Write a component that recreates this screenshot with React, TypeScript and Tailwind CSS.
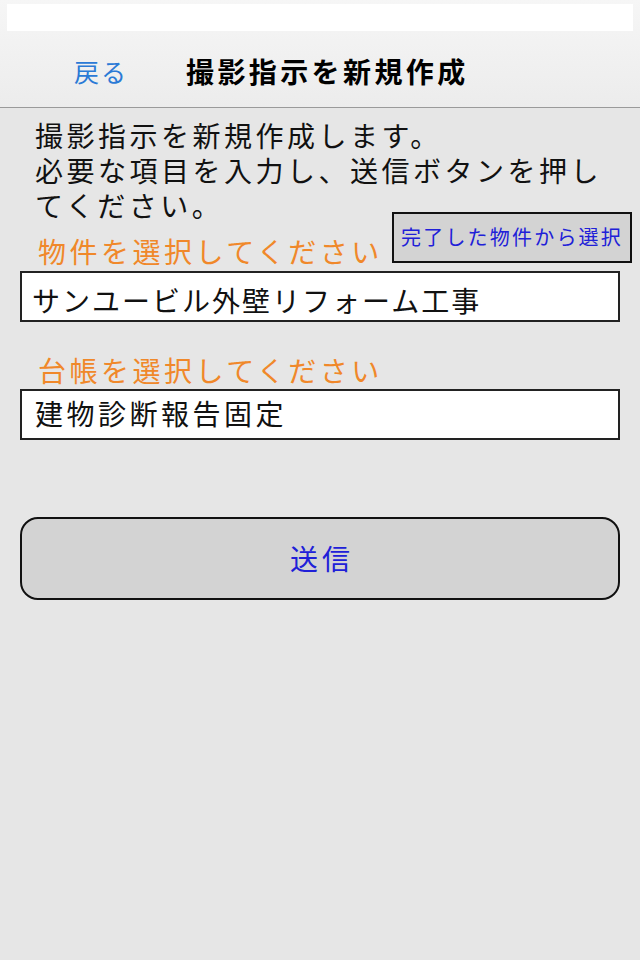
import React from "react";

const FONT = { fontFamily: '"Noto Sans CJK JP", "Noto Sans", sans-serif' };

export default function App() {
  return (
    <div className="w-[640px] h-[960px] bg-[#e6e6e6] flex flex-col" style={FONT}>
      {/* Header */}
      <div className="h-[108px] flex flex-col bg-gradient-to-b from-[#f6f6f6] to-[#ececec] border-b border-[#9a9a9a]">
        <div className="mt-[4px] mx-[7px] h-[27px] bg-white" />
        <div className="mt-[4px] h-[72px] flex items-center">
          <span className="ml-[74px] text-[25px] leading-none text-[#2b7ad6] tracking-[2px]">戻る</span>
          <span className="ml-[58px] text-[28px] leading-none font-bold text-black tracking-[3.4px]">
            撮影指示を新規作成
          </span>
        </div>
      </div>

      {/* Body */}
      <div className="flex flex-col pl-[20px]">
        <div className="mt-[10px] pl-[15px] text-[28px] leading-[35px] tracking-[3.5px] text-[#111] whitespace-nowrap">
          <div className="h-[35px]">撮影指示を新規作成します。</div>
          <div className="h-[35px]">必要な項目を入力し、送信ボタンを押し</div>
          <div className="h-[35px]">てください。</div>
        </div>

        <div className="mt-[-11.5px] w-[612px] h-[59px] flex justify-between items-start">
          <span className="pl-[18px] pt-[24px] text-[28px] leading-[30px] tracking-[3.5px] text-[#f0882a] whitespace-nowrap">
            物件を選択してください
          </span>
          <button className="w-[240px] h-[51px] border-2 border-[#111] bg-[#d3d3d3] flex items-center justify-center text-[20px] leading-none tracking-[2.2px] text-[#2020d8] whitespace-nowrap">
            完了した物件から選択
          </button>
        </div>

        <div className="mt-[0px] w-[600px] h-[51px] border-2 border-[#222] bg-white flex items-center pl-[10px] pt-[8px] text-[28px] leading-none tracking-[2px] text-[#111] whitespace-nowrap">
          サンユービル外壁リフォーム工事
        </div>

        <span className="mt-[33px] pl-[18px] h-[33px] text-[28px] leading-[30px] tracking-[3.5px] text-[#f0882a] whitespace-nowrap">
          台帳を選択してください
        </span>

        <div className="mt-[1px] w-[600px] h-[51px] border-2 border-[#222] bg-white flex items-center pl-[13px] pb-[2px] text-[28px] leading-none tracking-[3.5px] text-[#111] whitespace-nowrap">
          建物診断報告固定
        </div>

        <button className="mt-[77px] w-[600px] h-[83px] rounded-[18px] border-2 border-[#111] bg-[#d3d3d3] flex items-center justify-center text-[28px] leading-none tracking-[4px] pl-[4px] text-[#2020d8]">
          送信
        </button>
      </div>
    </div>
  );
}
